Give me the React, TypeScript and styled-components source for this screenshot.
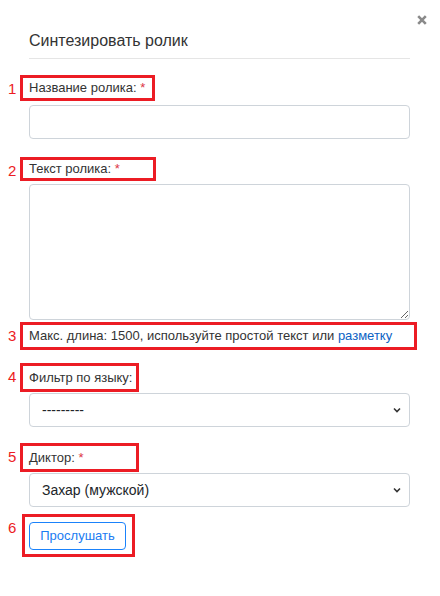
import React from 'react';
import styled, { createGlobalStyle } from 'styled-components';

const GlobalStyle = createGlobalStyle`
  html, body {
    margin: 0;
    padding: 0;
    background: #fff;
  }
  body {
    font-family: "Liberation Sans", Arial, sans-serif;
    color: #212529;
  }
  * {
    box-sizing: border-box;
  }
`;

const Page = styled.div`
  width: 440px;
  min-height: 596px;
`;

const Header = styled.div`
  display: flex;
  align-items: flex-start;
  padding-left: 29px;
`;

const TitleBlock = styled.div`
  width: 381px;
  padding-top: 31px;
  padding-bottom: 7px;
  border-bottom: 1px solid #e5e5e5;
`;

const Title = styled.h4`
  margin: 0;
  font-size: 16px;
  line-height: 20px;
  font-weight: 400;
  color: #333;
`;

const CloseButton = styled.button`
  display: flex;
  width: 10px;
  height: 10px;
  margin: 15px 0 0 7px;
  padding: 0;
  border: 0;
  background: none;
  color: #8a8a8a;
  cursor: pointer;
`;

const Form = styled.form`
  display: flex;
  flex-direction: column;
`;

const AnnotRow = styled.div<{ $mt: number }>`
  display: flex;
  align-items: flex-start;
  margin-top: ${({ $mt }) => $mt}px;
`;

const Num = styled.span`
  width: 20px;
  padding-left: 8px;
  margin-top: 6px;
  font-size: 15px;
  line-height: 15px;
  color: #ec1c24;
`;

const AnnotBox = styled.div<{ $w: number; $h: number; $ml?: number; $pl?: number }>`
  display: flex;
  align-items: center;
  width: ${({ $w }) => $w}px;
  height: ${({ $h }) => $h}px;
  margin-left: ${({ $ml }) => $ml || 0}px;
  padding-left: ${({ $pl }) => ($pl === undefined ? 6 : $pl)}px;
  border: 3px solid #ec1c24;
`;

const Label = styled.label`
  font-size: 13px;
  line-height: 16px;
  color: #333;
  white-space: nowrap;
`;

const Required = styled.span`
  color: #dc3545;
`;

const Hint = styled.span`
  font-size: 13px;
  line-height: 16px;
  color: #333;
  white-space: nowrap;
`;

const Link = styled.a`
  color: #0b62c4;
  text-decoration: none;
`;

const Control = styled.div<{ $mt: number }>`
  width: 381px;
  margin-left: 29px;
  margin-top: ${({ $mt }) => $mt}px;
  display: flex;
`;

const TextInput = styled.input`
  width: 100%;
  height: 34px;
  padding: 0 12px;
  border: 1px solid #ced4da;
  border-radius: 4px;
  font: inherit;
  font-size: 14px;
  outline: none;
`;

const TextArea = styled.textarea`
  width: 100%;
  height: 136px;
  padding: 6px 12px;
  border: 1px solid #ced4da;
  border-radius: 4px;
  font: inherit;
  font-size: 14px;
  outline: none;
  resize: vertical;
`;

const SelectBox = styled.div`
  display: flex;
  align-items: center;
  width: 100%;
  height: 34px;
  padding: 0 6px 0 12px;
  border: 1px solid #ced4da;
  border-radius: 4px;
`;

const NativeSelect = styled.select`
  flex: 1;
  appearance: none;
  border: 0;
  padding: 0;
  background: transparent;
  font-family: inherit;
  font-size: 14px;
  color: #212529;
  outline: none;
`;

const Chevron = styled.svg`
  width: 8px;
  height: 6px;
  margin-right: 2px;
  color: #333;
`;

const PlayButton = styled.button`
  width: 97px;
  height: 28px;
  padding: 0;
  border: 1px solid #1a82fb;
  border-radius: 4px;
  background: #fff;
  color: #1a7cf2;
  font-family: inherit;
  font-size: 13px;
  cursor: pointer;
`;

const Select: React.FC<{ value: string }> = ({ value }) => (
  <SelectBox>
    <NativeSelect defaultValue={value}>
      <option value={value}>{value}</option>
    </NativeSelect>
    <Chevron viewBox="0 0 8 6">
      <path d="M1 1.5 L4 4.5 L7 1.5" fill="none" stroke="currentColor" strokeWidth="1.6" />
    </Chevron>
  </SelectBox>
);

export default function App() {
  return (
    <Page>
      <GlobalStyle />
      <Header>
        <TitleBlock>
          <Title>Синтезировать ролик</Title>
        </TitleBlock>
        <CloseButton type="button" aria-label="Закрыть">
          <svg viewBox="0 0 10 10" width="10" height="10">
            <path d="M1.2 1.2 L8.8 8.8 M8.8 1.2 L1.2 8.8" stroke="currentColor" strokeWidth="2.6" />
          </svg>
        </CloseButton>
      </Header>

      <Form>
        <AnnotRow $mt={16}>
          <Num>1</Num>
          <AnnotBox $w={135} $h={26}>
            <Label>
              Название ролика: <Required>*</Required>
            </Label>
          </AnnotBox>
        </AnnotRow>
        <Control $mt={4}>
          <TextInput type="text" />
        </Control>

        <AnnotRow $mt={18}>
          <Num>2</Num>
          <AnnotBox $w={136} $h={24}>
            <Label>
              Текст ролика: <Required>*</Required>
            </Label>
          </AnnotBox>
        </AnnotRow>
        <Control $mt={3}>
          <TextArea />
        </Control>

        <AnnotRow $mt={2}>
          <Num>3</Num>
          <AnnotBox $w={397} $h={28}>
            <Hint>
              Макс. длина: 1500, используйте простой текст или <Link href="#">разметку</Link>
            </Hint>
          </AnnotBox>
        </AnnotRow>

        <AnnotRow $mt={13}>
          <Num>4</Num>
          <AnnotBox $w={119} $h={29}>
            <Label>Фильтр по языку:</Label>
          </AnnotBox>
        </AnnotRow>
        <Control $mt={1}>
          <Select value="---------" />
        </Control>

        <AnnotRow $mt={16}>
          <Num>5</Num>
          <AnnotBox $w={119} $h={29}>
            <Label>
              Диктор: <Required>*</Required>
            </Label>
          </AnnotBox>
        </AnnotRow>
        <Control $mt={1}>
          <Select value="Захар (мужской)" />
        </Control>

        <AnnotRow $mt={7}>
          <Num>6</Num>
          <AnnotBox $w={113} $h={43} $ml={2} $pl={4}>
            <PlayButton type="button">Прослушать</PlayButton>
          </AnnotBox>
        </AnnotRow>
      </Form>
    </Page>
  );
}
